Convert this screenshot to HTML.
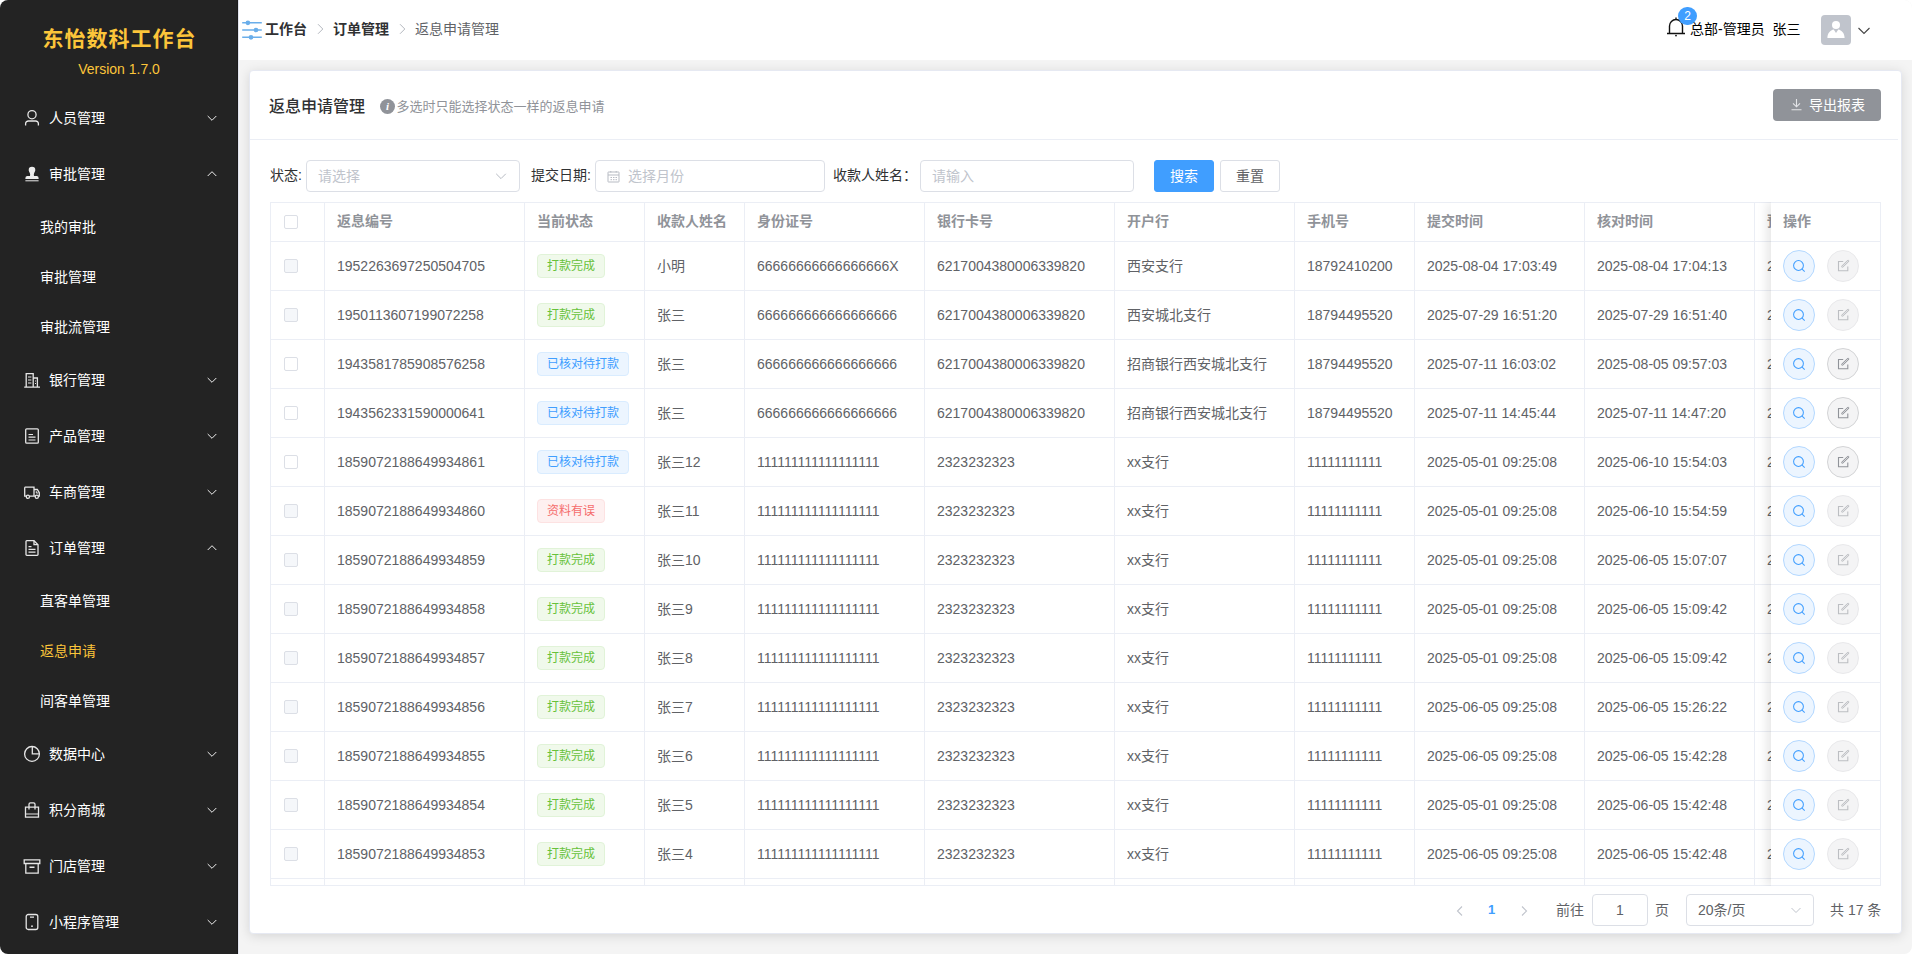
<!DOCTYPE html>
<html lang="zh-CN"><head><meta charset="utf-8"><title>返息申请管理</title>
<style>
*{box-sizing:border-box;margin:0;padding:0}
html,body{width:1912px;height:954px;overflow:hidden;background:#fff}
body{font-family:"Liberation Sans","Noto Sans CJK SC",sans-serif;font-size:14px;color:#606266;position:relative}
.abs{position:absolute}
#side{position:absolute;left:0;top:0;width:238px;height:954px;background:#232323;border-radius:8px 0 0 8px;overflow:hidden;border-right:1px solid #1a1a1a}
#side .title{position:absolute;left:0;width:238px;top:22px;height:34px;line-height:34px;text-align:center;font-size:21px;font-weight:700;color:#fcc53a;letter-spacing:1px;padding-left:1px}
#side .ver{position:absolute;left:0;width:238px;top:59px;height:20px;line-height:20px;text-align:center;font-size:14px;color:#fcc53a}
.mi{position:absolute;left:0;width:238px;height:56px;line-height:56px;color:#fff;font-size:14px}
.mi .tx{position:absolute;left:49px;top:0}
.mi svg.ic{position:absolute;left:23px;top:19px;width:18px;height:18px}
.mi svg.ar{position:absolute;left:206px;top:22px;width:12px;height:12px}
.si{position:absolute;left:40px;height:50px;line-height:50px;color:#fff;font-size:14px}
.si.act{color:#fcc53a}
#main{position:absolute;left:238px;top:0;width:1674px;height:954px;background:#f4f4f4;overflow:hidden;border-radius:0 8px 8px 0}
#vline{position:absolute;left:0;top:0;width:1px;height:954px;background:#e1e3ee}
#hdr{position:absolute;left:0;top:0;width:1674px;height:60px;background:#fff}
.bc{position:absolute;top:0;height:58px;line-height:58px;font-size:14px;white-space:nowrap}
.bc b{color:#303133;font-weight:700}
#card{position:absolute;left:11px;top:70px;width:1653px;height:864px;background:#fff;border-radius:4px;box-shadow:0 2px 12px 0 rgba(0,0,0,.125);border:1px solid #e6e9f2}
.ipt{position:absolute;height:32px;border:1px solid #dcdfe6;border-radius:4px;background:#fff;color:#c0c4cc;font-size:14px;line-height:30px;white-space:nowrap}
.lbl{position:absolute;height:32px;line-height:32px;font-size:14px;color:#303133;white-space:nowrap}
.btn{position:absolute;height:32px;line-height:30px;border-radius:3px;font-size:14px;text-align:center;border:1px solid #dcdfe6;color:#606266;background:#fff}
#tbl{position:absolute;left:20px;top:131px;width:1611px;height:684px;overflow:hidden;border:1px solid #ebeef5;border-right:none}
.row{position:absolute;left:0;height:49px;width:1800px;border-bottom:1px solid #ebeef5}
.row.h{height:39px}
.c{position:absolute;top:0;height:100%;border-right:1px solid #ebeef5;padding-left:12px;line-height:48px;white-space:nowrap;overflow:hidden;font-size:14px;color:#606266}
.row.h .c{line-height:36px;font-weight:700;color:#909399}
.cb{position:absolute;left:13px;width:14px;height:14px;border:1px solid #dcdfe6;border-radius:2px;background:#fff}
.cb.d{background:#f5f7fa}
.tag{display:inline-block;height:24px;line-height:22px;padding:0 9px;font-size:12px;border-radius:4px;border:1px solid;vertical-align:middle;position:relative;top:-1px}
.tag.g{background:#f0f9eb;border-color:#e1f3d8;color:#67c23a}
.tag.b{background:#ecf5ff;border-color:#d9ecff;color:#409eff}
.tag.r{background:#fef0f0;border-color:#fde2e2;color:#f56c6c}
#fix{position:absolute;left:1521px;top:131px;width:110px;height:684px;overflow:hidden;background:#fff;box-shadow:-4px 0 10px rgba(0,0,0,.10);clip-path:inset(0 0 0 -14px);border-top:1px solid #ebeef5;border-right:1px solid #ebeef5;border-bottom:1px solid #ebeef5}
#fix .row{width:110px}
.ob{position:absolute;top:8px;width:32px;height:32px;border-radius:50%;border:1px solid}
.ob svg{position:absolute;left:8px;top:8px;width:14px;height:14px}
.ob.s{left:12px;background:#ecf5ff;border-color:#b3d8ff;color:#409eff}
.ob.e{left:56px;background:#f4f4f5;border-color:#d3d4d6;color:#909399}
.ob.e.d{background:#f4f4f5;border-color:#e9e9eb;color:#bcbec2}
.pg{position:absolute;top:823px;height:32px;line-height:32px;font-size:13px;color:#606266;white-space:nowrap}
</style></head>
<body>
<div id="side">
<div class="title">东怡数科工作台</div>
<div class="ver">Version 1.7.0</div>
<div class="mi" style="top:90px"><svg class="ic" viewBox="0 0 18 18" fill="none" stroke="#e6e6e6" stroke-width="1.3"><circle cx="9" cy="5.7" r="4.1"/><path d="M2.6 16.6v-1.8a2.8 2.8 0 0 1 2.8-2.8h7.2a2.8 2.8 0 0 1 2.8 2.8v1.8"/></svg><span class="tx">人员管理</span><svg class="ar" viewBox="0 0 12 12"><path d="M1.7 4 L6 8.3 L10.3 4" fill="none" stroke="#f0f0f0" stroke-width="1"/></svg></div>
<div class="mi" style="top:146px"><svg class="ic" viewBox="0 0 18 18" fill="none" stroke="#e6e6e6" stroke-width="1.3"><path d="M9 1.7a3.3 3.3 0 0 0-3.3 3.3c0 1.2 0.6 2 1.1 2.9 0.4 0.8 0.5 1.9 0.1 3.100H4.4a2 2 0 0 0-2 2v1.1h13.2v-1.1a2 2 0 0 0-2-2h-2.500c-0.4-1.200-0.300-2.300 0.1-3.100 0.5-0.9 1.1-1.700 1.1-2.900a3.3 3.3 0 0 0-3.3-3.3z" fill="#ececec" stroke="none"/><path d="M2.4 15.8h13.2" stroke="#ececec" stroke-width="1"/></svg><span class="tx">审批管理</span><svg class="ar" viewBox="0 0 12 12"><path d="M1.7 8 L6 3.7 L10.3 8" fill="none" stroke="#f0f0f0" stroke-width="1"/></svg></div>
<div class="si" style="top:202px">我的审批</div>
<div class="si" style="top:252px">审批管理</div>
<div class="si" style="top:302px">审批流管理</div>
<div class="mi" style="top:352px"><svg class="ic" viewBox="0 0 18 18" fill="none" stroke="#e6e6e6" stroke-width="1.3"><path d="M3.200 16.200v-13.500h7v13.500M10.200 7h4.200v9.200M1.200 16.200h15.800"/><path d="M5 6h3.400M5 9h3.400M5 12h3.400M12 10h1M12 12.500h1" stroke-width="1.200"/></svg><span class="tx">银行管理</span><svg class="ar" viewBox="0 0 12 12"><path d="M1.7 4 L6 8.3 L10.3 4" fill="none" stroke="#f0f0f0" stroke-width="1"/></svg></div>
<div class="mi" style="top:408px"><svg class="ic" viewBox="0 0 18 18" fill="none" stroke="#e6e6e6" stroke-width="1.3"><rect x="2.700" y="1.800" width="12.600" height="14.400" rx="1"/><path d="M5.500 7.500h4.500M5.500 10.200h7M5.500 13h7" stroke-width="1.200"/></svg><span class="tx">产品管理</span><svg class="ar" viewBox="0 0 12 12"><path d="M1.7 4 L6 8.3 L10.3 4" fill="none" stroke="#f0f0f0" stroke-width="1"/></svg></div>
<div class="mi" style="top:464px"><svg class="ic" viewBox="0 0 18 18" fill="none" stroke="#e6e6e6" stroke-width="1.3"><path d="M1.700 4.200h9.300v9h-4.600M3.400 13.200h-1.700v-9M11 6.500h3.300l2 3.300v3.400h-1.300M11 13.200h1.300"/><circle cx="4.900" cy="13.800" r="1.600"/><circle cx="13.800" cy="13.800" r="1.600"/><path d="M13.300 8.200v1.800h1.800" stroke-width="1"/></svg><span class="tx">车商管理</span><svg class="ar" viewBox="0 0 12 12"><path d="M1.7 4 L6 8.3 L10.3 4" fill="none" stroke="#f0f0f0" stroke-width="1"/></svg></div>
<div class="mi" style="top:520px"><svg class="ic" viewBox="0 0 18 18" fill="none" stroke="#e6e6e6" stroke-width="1.3"><path d="M3 2.500a.8.800 0 0 1 .8-.8h7.200l4 4v9.800a.8.800 0 0 1-.8.800h-10.400a.8.800 0 0 1-.8-.8z"/><path d="M11 1.700v4h4"/><path d="M5.500 7.700h3M5.500 10.400h7M5.500 13.100h7" stroke-width="1.200"/></svg><span class="tx">订单管理</span><svg class="ar" viewBox="0 0 12 12"><path d="M1.7 8 L6 3.7 L10.3 8" fill="none" stroke="#f0f0f0" stroke-width="1"/></svg></div>
<div class="si" style="top:576px">直客单管理</div>
<div class="si act" style="top:626px">返息申请</div>
<div class="si" style="top:676px">间客单管理</div>
<div class="mi" style="top:726px"><svg class="ic" viewBox="0 0 18 18" fill="none" stroke="#e6e6e6" stroke-width="1.3"><circle cx="9" cy="8.900" r="7.400"/><path d="M9.300 1.500v7.400h7.100"/></svg><span class="tx">数据中心</span><svg class="ar" viewBox="0 0 12 12"><path d="M1.7 4 L6 8.3 L10.3 4" fill="none" stroke="#f0f0f0" stroke-width="1"/></svg></div>
<div class="mi" style="top:782px"><svg class="ic" viewBox="0 0 18 18" fill="none" stroke="#e6e6e6" stroke-width="1.3"><path d="M2.500 6.200h13v10h-13z"/><path d="M6 8.500v-5.200a1.500 1.500 0 0 1 1.500-1.500h3a1.500 1.500 0 0 1 1.500 1.500v5.200"/><path d="M2.500 13h13" stroke-width="1.100"/></svg><span class="tx">积分商城</span><svg class="ar" viewBox="0 0 12 12"><path d="M1.7 4 L6 8.3 L10.3 4" fill="none" stroke="#f0f0f0" stroke-width="1"/></svg></div>
<div class="mi" style="top:838px"><svg class="ic" viewBox="0 0 18 18" fill="none" stroke="#e6e6e6" stroke-width="1.3"><path d="M1.200 2.800h15.600v3.700h-15.600z"/><path d="M2.800 6.500v9.700h12.400v-9.700"/><path d="M6.500 10.300h5" stroke-width="1.400"/></svg><span class="tx">门店管理</span><svg class="ar" viewBox="0 0 12 12"><path d="M1.7 4 L6 8.3 L10.3 4" fill="none" stroke="#f0f0f0" stroke-width="1"/></svg></div>
<div class="mi" style="top:894px"><svg class="ic" viewBox="0 0 18 18" fill="none" stroke="#e6e6e6" stroke-width="1.3"><rect x="3.200" y="1.500" width="11.600" height="15" rx="2"/><path d="M7 4.200h4" stroke-width="1.200"/><circle cx="9" cy="13.200" r=".9" fill="#e6e6e6" stroke="none"/></svg><span class="tx">小程序管理</span><svg class="ar" viewBox="0 0 12 12"><path d="M1.7 4 L6 8.3 L10.3 4" fill="none" stroke="#f0f0f0" stroke-width="1"/></svg></div>
</div>
<div id="main">
<div id="hdr">
<svg class="abs" style="left:3px;top:18px;width:22px;height:24px" viewBox="0 0 22 24" fill="none" stroke="#6aaeea" stroke-width="1.500"><path d="M1.200 4.800h19.600M1.200 12h19.600M1.200 19.300h19.600"/><circle cx="6.900" cy="4.800" r="1.600" fill="#6aaeea"/><circle cx="15" cy="12" r="1.600" fill="#6aaeea"/><circle cx="10" cy="19.300" r="1.600" fill="#6aaeea"/></svg>
<div class="bc" style="left:27px"><b>工作台</b></div>
<svg class="abs" style="left:76px;top:23px;width:12px;height:12px" viewBox="0 0 12 12"><path d="M4 1.200 L8.800 6 L4 10.800" fill="none" stroke="#b4b8bf" stroke-width="1"/></svg>
<div class="bc" style="left:95px"><b>订单管理</b></div>
<svg class="abs" style="left:158px;top:23px;width:12px;height:12px" viewBox="0 0 12 12"><path d="M4 1.200 L8.800 6 L4 10.800" fill="none" stroke="#b4b8bf" stroke-width="1"/></svg>
<div class="bc" style="left:177px;color:#606266">返息申请管理</div>
<svg class="abs" style="left:1427px;top:16px;width:22px;height:22px" viewBox="0 0 22 22" fill="none" stroke="#111" stroke-width="1.400"><path d="M2 17.500h18M4.500 17.500v-7.500a6.500 6.500 0 0 1 13 0v7.500M11 3.500v-2"/><circle cx="11" cy="19.600" r=".9" fill="#111" stroke="none"/></svg>
<div class="abs" style="left:1440px;top:7px;width:19px;height:18px;border-radius:9px;background:#409eff;color:#fff;font-size:12px;line-height:18px;text-align:center">2</div>
<div class="abs" style="left:1452px;top:0;height:58px;line-height:58px;font-size:14px;color:#000;white-space:nowrap">总部-管理员&nbsp; 张三</div>
<div class="abs" style="left:1583px;top:15px;width:30px;height:30px;border-radius:4px;background:#c0c4cc;overflow:hidden"><svg viewBox="0 0 30 30" style="position:absolute;left:0;top:0;width:30px;height:30px"><circle cx="15" cy="10" r="4" fill="#fff"/><path d="M6.4 23c0-4.6 3-7.9 6.3-8.4l2.3 3.3 2.3-3.3c3.3 0.5 6.3 3.8 6.3 8.4z" fill="#fff"/></svg></div>
<svg class="abs" style="left:1619px;top:24px;width:14px;height:14px" viewBox="0 0 14 14"><path d="M1.500 4 L7 9.500 L12.500 4" fill="none" stroke="#444" stroke-width="1.100"/></svg>
</div>
<div id="card">
<div class="abs" style="left:19px;top:20px;height:32px;line-height:32px;font-size:16px;color:#303133;font-weight:500;white-space:nowrap">返息申请管理</div>
<div class="abs" style="left:130px;top:28px;width:15px;height:15px;border-radius:50%;background:#909399;color:#fff;font-size:11px;line-height:15px;text-align:center;font-style:italic;font-weight:700;font-family:'Liberation Serif',serif">i</div>
<div class="abs" style="left:146.500px;top:20px;height:32px;line-height:32px;font-size:13px;color:#909399;white-space:nowrap">多选时只能选择状态一样的返息申请</div>
<div class="abs" style="left:1523px;top:18px;width:108px;height:32px;border-radius:4px;background:#909399;opacity:1;color:#fff;font-size:14px;line-height:32px;white-space:nowrap"><svg style="position:absolute;left:16.6px;top:9.4px;width:13px;height:13px" viewBox="0 0 13 13" fill="none" stroke="#e4e5e8" stroke-width="1.100"><path d="M6.500 1v7.500M3 5.300l3.500 3.500 3.500-3.500M1.500 11.800h10"/></svg><span style="position:absolute;left:36px">导出报表</span></div>
<div class="abs" style="left:0;top:68px;width:1648px;height:1px;background:#ebeef5"></div>
<div class="lbl" style="left:20px;top:88px">状态:</div>
<div class="ipt" style="left:56px;top:89px;width:214px;padding-left:11px">请选择<svg style="position:absolute;right:12px;top:9px;width:12px;height:12px" viewBox="0 0 12 12"><path d="M1.200 3.800 L6 8.600 L10.800 3.800" fill="none" stroke="#b7bbc3" stroke-width="1"/></svg></div>
<div class="lbl" style="left:281px;top:88px">提交日期:</div>
<div class="ipt" style="left:345px;top:89px;width:230px;padding-left:32px">选择月份<svg style="position:absolute;left:10.500px;top:9px;width:13px;height:13px" viewBox="0 0 13 13" fill="none" stroke="#b7bbc3" stroke-width="1"><rect x="1" y="2" width="11" height="10" rx=".4"/><path d="M1 5h11M3.500 7.500h1.500M6 7.500h1.500M8.500 7.500h1.500M3.500 9.700h1.500M6 9.700h1.500M8.500 9.700h1.500M3.800 1v1.500M9.200 1v1.500"/></svg></div>
<div class="lbl" style="left:583px;top:88px">收款人姓名：</div>
<div class="ipt" style="left:670px;top:89px;width:214px;padding-left:11px">请输入</div>
<div class="btn" style="left:904px;top:89px;width:60px;background:#409eff;border-color:#409eff;color:#fff">搜索</div>
<div class="btn" style="left:970px;top:89px;width:60px">重置</div>
<div id="tbl">
<div class="row h" style="top:0"><div class="c" style="left:0px;width:54px"><span class="cb" style="top:12px"></span></div><div class="c" style="left:54px;width:200px">返息编号</div><div class="c" style="left:254px;width:120px">当前状态</div><div class="c" style="left:374px;width:100px">收款人姓名</div><div class="c" style="left:474px;width:180px">身份证号</div><div class="c" style="left:654px;width:190px">银行卡号</div><div class="c" style="left:844px;width:180px">开户行</div><div class="c" style="left:1024px;width:120px">手机号</div><div class="c" style="left:1144px;width:170px">提交时间</div><div class="c" style="left:1314px;width:170px">核对时间</div><div class="c" style="left:1484px;width:170px">预计打款时间</div></div>
<div class="row" style="top:39px"><div class="c" style="left:0px;width:54px"><span class="cb d" style="top:17px"></span></div><div class="c" style="left:54px;width:200px">1952263697250504705</div><div class="c" style="left:254px;width:120px"><span class="tag g">打款完成</span></div><div class="c" style="left:374px;width:100px">小明</div><div class="c" style="left:474px;width:180px">66666666666666666X</div><div class="c" style="left:654px;width:190px">6217004380006339820</div><div class="c" style="left:844px;width:180px">西安支行</div><div class="c" style="left:1024px;width:120px">18792410200</div><div class="c" style="left:1144px;width:170px">2025-08-04 17:03:49</div><div class="c" style="left:1314px;width:170px">2025-08-04 17:04:13</div><div class="c" style="left:1484px;width:170px">2025-08-05 10:00:00</div></div>
<div class="row" style="top:88px"><div class="c" style="left:0px;width:54px"><span class="cb d" style="top:17px"></span></div><div class="c" style="left:54px;width:200px">1950113607199072258</div><div class="c" style="left:254px;width:120px"><span class="tag g">打款完成</span></div><div class="c" style="left:374px;width:100px">张三</div><div class="c" style="left:474px;width:180px">666666666666666666</div><div class="c" style="left:654px;width:190px">6217004380006339820</div><div class="c" style="left:844px;width:180px">西安城北支行</div><div class="c" style="left:1024px;width:120px">18794495520</div><div class="c" style="left:1144px;width:170px">2025-07-29 16:51:20</div><div class="c" style="left:1314px;width:170px">2025-07-29 16:51:40</div><div class="c" style="left:1484px;width:170px">2025-08-05 10:00:00</div></div>
<div class="row" style="top:137px"><div class="c" style="left:0px;width:54px"><span class="cb" style="top:17px"></span></div><div class="c" style="left:54px;width:200px">1943581785908576258</div><div class="c" style="left:254px;width:120px"><span class="tag b">已核对待打款</span></div><div class="c" style="left:374px;width:100px">张三</div><div class="c" style="left:474px;width:180px">666666666666666666</div><div class="c" style="left:654px;width:190px">6217004380006339820</div><div class="c" style="left:844px;width:180px">招商银行西安城北支行</div><div class="c" style="left:1024px;width:120px">18794495520</div><div class="c" style="left:1144px;width:170px">2025-07-11 16:03:02</div><div class="c" style="left:1314px;width:170px">2025-08-05 09:57:03</div><div class="c" style="left:1484px;width:170px">2025-08-05 10:00:00</div></div>
<div class="row" style="top:186px"><div class="c" style="left:0px;width:54px"><span class="cb" style="top:17px"></span></div><div class="c" style="left:54px;width:200px">1943562331590000641</div><div class="c" style="left:254px;width:120px"><span class="tag b">已核对待打款</span></div><div class="c" style="left:374px;width:100px">张三</div><div class="c" style="left:474px;width:180px">666666666666666666</div><div class="c" style="left:654px;width:190px">6217004380006339820</div><div class="c" style="left:844px;width:180px">招商银行西安城北支行</div><div class="c" style="left:1024px;width:120px">18794495520</div><div class="c" style="left:1144px;width:170px">2025-07-11 14:45:44</div><div class="c" style="left:1314px;width:170px">2025-07-11 14:47:20</div><div class="c" style="left:1484px;width:170px">2025-08-05 10:00:00</div></div>
<div class="row" style="top:235px"><div class="c" style="left:0px;width:54px"><span class="cb" style="top:17px"></span></div><div class="c" style="left:54px;width:200px">1859072188649934861</div><div class="c" style="left:254px;width:120px"><span class="tag b">已核对待打款</span></div><div class="c" style="left:374px;width:100px">张三12</div><div class="c" style="left:474px;width:180px">111111111111111111</div><div class="c" style="left:654px;width:190px">2323232323</div><div class="c" style="left:844px;width:180px">xx支行</div><div class="c" style="left:1024px;width:120px">11111111111</div><div class="c" style="left:1144px;width:170px">2025-05-01 09:25:08</div><div class="c" style="left:1314px;width:170px">2025-06-10 15:54:03</div><div class="c" style="left:1484px;width:170px">2025-08-05 10:00:00</div></div>
<div class="row" style="top:284px"><div class="c" style="left:0px;width:54px"><span class="cb d" style="top:17px"></span></div><div class="c" style="left:54px;width:200px">1859072188649934860</div><div class="c" style="left:254px;width:120px"><span class="tag r">资料有误</span></div><div class="c" style="left:374px;width:100px">张三11</div><div class="c" style="left:474px;width:180px">111111111111111111</div><div class="c" style="left:654px;width:190px">2323232323</div><div class="c" style="left:844px;width:180px">xx支行</div><div class="c" style="left:1024px;width:120px">11111111111</div><div class="c" style="left:1144px;width:170px">2025-05-01 09:25:08</div><div class="c" style="left:1314px;width:170px">2025-06-10 15:54:59</div><div class="c" style="left:1484px;width:170px">2025-08-05 10:00:00</div></div>
<div class="row" style="top:333px"><div class="c" style="left:0px;width:54px"><span class="cb d" style="top:17px"></span></div><div class="c" style="left:54px;width:200px">1859072188649934859</div><div class="c" style="left:254px;width:120px"><span class="tag g">打款完成</span></div><div class="c" style="left:374px;width:100px">张三10</div><div class="c" style="left:474px;width:180px">111111111111111111</div><div class="c" style="left:654px;width:190px">2323232323</div><div class="c" style="left:844px;width:180px">xx支行</div><div class="c" style="left:1024px;width:120px">11111111111</div><div class="c" style="left:1144px;width:170px">2025-05-01 09:25:08</div><div class="c" style="left:1314px;width:170px">2025-06-05 15:07:07</div><div class="c" style="left:1484px;width:170px">2025-08-05 10:00:00</div></div>
<div class="row" style="top:382px"><div class="c" style="left:0px;width:54px"><span class="cb d" style="top:17px"></span></div><div class="c" style="left:54px;width:200px">1859072188649934858</div><div class="c" style="left:254px;width:120px"><span class="tag g">打款完成</span></div><div class="c" style="left:374px;width:100px">张三9</div><div class="c" style="left:474px;width:180px">111111111111111111</div><div class="c" style="left:654px;width:190px">2323232323</div><div class="c" style="left:844px;width:180px">xx支行</div><div class="c" style="left:1024px;width:120px">11111111111</div><div class="c" style="left:1144px;width:170px">2025-05-01 09:25:08</div><div class="c" style="left:1314px;width:170px">2025-06-05 15:09:42</div><div class="c" style="left:1484px;width:170px">2025-08-05 10:00:00</div></div>
<div class="row" style="top:431px"><div class="c" style="left:0px;width:54px"><span class="cb d" style="top:17px"></span></div><div class="c" style="left:54px;width:200px">1859072188649934857</div><div class="c" style="left:254px;width:120px"><span class="tag g">打款完成</span></div><div class="c" style="left:374px;width:100px">张三8</div><div class="c" style="left:474px;width:180px">111111111111111111</div><div class="c" style="left:654px;width:190px">2323232323</div><div class="c" style="left:844px;width:180px">xx支行</div><div class="c" style="left:1024px;width:120px">11111111111</div><div class="c" style="left:1144px;width:170px">2025-05-01 09:25:08</div><div class="c" style="left:1314px;width:170px">2025-06-05 15:09:42</div><div class="c" style="left:1484px;width:170px">2025-08-05 10:00:00</div></div>
<div class="row" style="top:480px"><div class="c" style="left:0px;width:54px"><span class="cb d" style="top:17px"></span></div><div class="c" style="left:54px;width:200px">1859072188649934856</div><div class="c" style="left:254px;width:120px"><span class="tag g">打款完成</span></div><div class="c" style="left:374px;width:100px">张三7</div><div class="c" style="left:474px;width:180px">111111111111111111</div><div class="c" style="left:654px;width:190px">2323232323</div><div class="c" style="left:844px;width:180px">xx支行</div><div class="c" style="left:1024px;width:120px">11111111111</div><div class="c" style="left:1144px;width:170px">2025-06-05 09:25:08</div><div class="c" style="left:1314px;width:170px">2025-06-05 15:26:22</div><div class="c" style="left:1484px;width:170px">2025-08-05 10:00:00</div></div>
<div class="row" style="top:529px"><div class="c" style="left:0px;width:54px"><span class="cb d" style="top:17px"></span></div><div class="c" style="left:54px;width:200px">1859072188649934855</div><div class="c" style="left:254px;width:120px"><span class="tag g">打款完成</span></div><div class="c" style="left:374px;width:100px">张三6</div><div class="c" style="left:474px;width:180px">111111111111111111</div><div class="c" style="left:654px;width:190px">2323232323</div><div class="c" style="left:844px;width:180px">xx支行</div><div class="c" style="left:1024px;width:120px">11111111111</div><div class="c" style="left:1144px;width:170px">2025-06-05 09:25:08</div><div class="c" style="left:1314px;width:170px">2025-06-05 15:42:28</div><div class="c" style="left:1484px;width:170px">2025-08-05 10:00:00</div></div>
<div class="row" style="top:578px"><div class="c" style="left:0px;width:54px"><span class="cb d" style="top:17px"></span></div><div class="c" style="left:54px;width:200px">1859072188649934854</div><div class="c" style="left:254px;width:120px"><span class="tag g">打款完成</span></div><div class="c" style="left:374px;width:100px">张三5</div><div class="c" style="left:474px;width:180px">111111111111111111</div><div class="c" style="left:654px;width:190px">2323232323</div><div class="c" style="left:844px;width:180px">xx支行</div><div class="c" style="left:1024px;width:120px">11111111111</div><div class="c" style="left:1144px;width:170px">2025-05-01 09:25:08</div><div class="c" style="left:1314px;width:170px">2025-06-05 15:42:48</div><div class="c" style="left:1484px;width:170px">2025-08-05 10:00:00</div></div>
<div class="row" style="top:627px"><div class="c" style="left:0px;width:54px"><span class="cb d" style="top:17px"></span></div><div class="c" style="left:54px;width:200px">1859072188649934853</div><div class="c" style="left:254px;width:120px"><span class="tag g">打款完成</span></div><div class="c" style="left:374px;width:100px">张三4</div><div class="c" style="left:474px;width:180px">111111111111111111</div><div class="c" style="left:654px;width:190px">2323232323</div><div class="c" style="left:844px;width:180px">xx支行</div><div class="c" style="left:1024px;width:120px">11111111111</div><div class="c" style="left:1144px;width:170px">2025-06-05 09:25:08</div><div class="c" style="left:1314px;width:170px">2025-06-05 15:42:48</div><div class="c" style="left:1484px;width:170px">2025-08-05 10:00:00</div></div>
<div class="row" style="top:676px"><div class="c" style="left:0px;width:54px"><span class="cb d" style="top:17px"></span></div><div class="c" style="left:54px;width:200px">1859072188649934852</div><div class="c" style="left:254px;width:120px"><span class="tag g">打款完成</span></div><div class="c" style="left:374px;width:100px">张三3</div><div class="c" style="left:474px;width:180px">111111111111111111</div><div class="c" style="left:654px;width:190px">2323232323</div><div class="c" style="left:844px;width:180px">xx支行</div><div class="c" style="left:1024px;width:120px">11111111111</div><div class="c" style="left:1144px;width:170px">2025-06-05 09:25:08</div><div class="c" style="left:1314px;width:170px">2025-06-05 15:42:48</div><div class="c" style="left:1484px;width:170px">2025-08-05 10:00:00</div></div>
</div>
<div id="fix">
<div class="row h" style="top:0"><div class="c" style="left:0;width:110px;border-right:none">操作</div></div>
<div class="row" style="top:39px"><span class="ob s"><svg viewBox="0 0 14 14" fill="none" stroke="currentColor" stroke-width="1.050"><circle cx="6.500" cy="6.500" r="4.900"/><path d="M10.100 10.200l2.600 2.400"/></svg></span><span class="ob e d"><svg viewBox="0 0 14 14" fill="none" stroke="currentColor" stroke-width="1.100"><path d="M7.200 2.500H2.500v9.200h9.300V7.600"/><path d="M6.400 7.500L12.100 2" stroke-width="2.300" stroke-linecap="round"/><path d="M6.400 7.500L12.100 2" stroke="#f4f4f5" stroke-width=".7" stroke-linecap="round"/></svg></span></div>
<div class="row" style="top:88px"><span class="ob s"><svg viewBox="0 0 14 14" fill="none" stroke="currentColor" stroke-width="1.050"><circle cx="6.500" cy="6.500" r="4.900"/><path d="M10.100 10.200l2.600 2.400"/></svg></span><span class="ob e d"><svg viewBox="0 0 14 14" fill="none" stroke="currentColor" stroke-width="1.100"><path d="M7.200 2.500H2.500v9.200h9.300V7.600"/><path d="M6.400 7.500L12.100 2" stroke-width="2.300" stroke-linecap="round"/><path d="M6.400 7.500L12.100 2" stroke="#f4f4f5" stroke-width=".7" stroke-linecap="round"/></svg></span></div>
<div class="row" style="top:137px"><span class="ob s"><svg viewBox="0 0 14 14" fill="none" stroke="currentColor" stroke-width="1.050"><circle cx="6.500" cy="6.500" r="4.900"/><path d="M10.100 10.200l2.600 2.400"/></svg></span><span class="ob e"><svg viewBox="0 0 14 14" fill="none" stroke="currentColor" stroke-width="1.100"><path d="M7.200 2.500H2.500v9.200h9.300V7.600"/><path d="M6.400 7.500L12.100 2" stroke-width="2.300" stroke-linecap="round"/><path d="M6.400 7.500L12.100 2" stroke="#f4f4f5" stroke-width=".7" stroke-linecap="round"/></svg></span></div>
<div class="row" style="top:186px"><span class="ob s"><svg viewBox="0 0 14 14" fill="none" stroke="currentColor" stroke-width="1.050"><circle cx="6.500" cy="6.500" r="4.900"/><path d="M10.100 10.200l2.600 2.400"/></svg></span><span class="ob e"><svg viewBox="0 0 14 14" fill="none" stroke="currentColor" stroke-width="1.100"><path d="M7.200 2.500H2.500v9.200h9.300V7.600"/><path d="M6.400 7.500L12.100 2" stroke-width="2.300" stroke-linecap="round"/><path d="M6.400 7.500L12.100 2" stroke="#f4f4f5" stroke-width=".7" stroke-linecap="round"/></svg></span></div>
<div class="row" style="top:235px"><span class="ob s"><svg viewBox="0 0 14 14" fill="none" stroke="currentColor" stroke-width="1.050"><circle cx="6.500" cy="6.500" r="4.900"/><path d="M10.100 10.200l2.600 2.400"/></svg></span><span class="ob e"><svg viewBox="0 0 14 14" fill="none" stroke="currentColor" stroke-width="1.100"><path d="M7.200 2.500H2.500v9.200h9.300V7.600"/><path d="M6.400 7.500L12.100 2" stroke-width="2.300" stroke-linecap="round"/><path d="M6.400 7.500L12.100 2" stroke="#f4f4f5" stroke-width=".7" stroke-linecap="round"/></svg></span></div>
<div class="row" style="top:284px"><span class="ob s"><svg viewBox="0 0 14 14" fill="none" stroke="currentColor" stroke-width="1.050"><circle cx="6.500" cy="6.500" r="4.900"/><path d="M10.100 10.200l2.600 2.400"/></svg></span><span class="ob e d"><svg viewBox="0 0 14 14" fill="none" stroke="currentColor" stroke-width="1.100"><path d="M7.200 2.500H2.500v9.200h9.300V7.600"/><path d="M6.400 7.500L12.100 2" stroke-width="2.300" stroke-linecap="round"/><path d="M6.400 7.500L12.100 2" stroke="#f4f4f5" stroke-width=".7" stroke-linecap="round"/></svg></span></div>
<div class="row" style="top:333px"><span class="ob s"><svg viewBox="0 0 14 14" fill="none" stroke="currentColor" stroke-width="1.050"><circle cx="6.500" cy="6.500" r="4.900"/><path d="M10.100 10.200l2.600 2.400"/></svg></span><span class="ob e d"><svg viewBox="0 0 14 14" fill="none" stroke="currentColor" stroke-width="1.100"><path d="M7.200 2.500H2.500v9.200h9.300V7.600"/><path d="M6.400 7.500L12.100 2" stroke-width="2.300" stroke-linecap="round"/><path d="M6.400 7.500L12.100 2" stroke="#f4f4f5" stroke-width=".7" stroke-linecap="round"/></svg></span></div>
<div class="row" style="top:382px"><span class="ob s"><svg viewBox="0 0 14 14" fill="none" stroke="currentColor" stroke-width="1.050"><circle cx="6.500" cy="6.500" r="4.900"/><path d="M10.100 10.200l2.600 2.400"/></svg></span><span class="ob e d"><svg viewBox="0 0 14 14" fill="none" stroke="currentColor" stroke-width="1.100"><path d="M7.200 2.500H2.500v9.200h9.300V7.600"/><path d="M6.400 7.500L12.100 2" stroke-width="2.300" stroke-linecap="round"/><path d="M6.400 7.500L12.100 2" stroke="#f4f4f5" stroke-width=".7" stroke-linecap="round"/></svg></span></div>
<div class="row" style="top:431px"><span class="ob s"><svg viewBox="0 0 14 14" fill="none" stroke="currentColor" stroke-width="1.050"><circle cx="6.500" cy="6.500" r="4.900"/><path d="M10.100 10.200l2.600 2.400"/></svg></span><span class="ob e d"><svg viewBox="0 0 14 14" fill="none" stroke="currentColor" stroke-width="1.100"><path d="M7.200 2.500H2.500v9.200h9.300V7.600"/><path d="M6.400 7.500L12.100 2" stroke-width="2.300" stroke-linecap="round"/><path d="M6.400 7.500L12.100 2" stroke="#f4f4f5" stroke-width=".7" stroke-linecap="round"/></svg></span></div>
<div class="row" style="top:480px"><span class="ob s"><svg viewBox="0 0 14 14" fill="none" stroke="currentColor" stroke-width="1.050"><circle cx="6.500" cy="6.500" r="4.900"/><path d="M10.100 10.200l2.600 2.400"/></svg></span><span class="ob e d"><svg viewBox="0 0 14 14" fill="none" stroke="currentColor" stroke-width="1.100"><path d="M7.200 2.500H2.500v9.200h9.300V7.600"/><path d="M6.400 7.500L12.100 2" stroke-width="2.300" stroke-linecap="round"/><path d="M6.400 7.500L12.100 2" stroke="#f4f4f5" stroke-width=".7" stroke-linecap="round"/></svg></span></div>
<div class="row" style="top:529px"><span class="ob s"><svg viewBox="0 0 14 14" fill="none" stroke="currentColor" stroke-width="1.050"><circle cx="6.500" cy="6.500" r="4.900"/><path d="M10.100 10.200l2.600 2.400"/></svg></span><span class="ob e d"><svg viewBox="0 0 14 14" fill="none" stroke="currentColor" stroke-width="1.100"><path d="M7.200 2.500H2.500v9.200h9.300V7.600"/><path d="M6.400 7.500L12.100 2" stroke-width="2.300" stroke-linecap="round"/><path d="M6.400 7.500L12.100 2" stroke="#f4f4f5" stroke-width=".7" stroke-linecap="round"/></svg></span></div>
<div class="row" style="top:578px"><span class="ob s"><svg viewBox="0 0 14 14" fill="none" stroke="currentColor" stroke-width="1.050"><circle cx="6.500" cy="6.500" r="4.900"/><path d="M10.100 10.200l2.600 2.400"/></svg></span><span class="ob e d"><svg viewBox="0 0 14 14" fill="none" stroke="currentColor" stroke-width="1.100"><path d="M7.200 2.500H2.500v9.200h9.300V7.600"/><path d="M6.400 7.500L12.100 2" stroke-width="2.300" stroke-linecap="round"/><path d="M6.400 7.500L12.100 2" stroke="#f4f4f5" stroke-width=".7" stroke-linecap="round"/></svg></span></div>
<div class="row" style="top:627px"><span class="ob s"><svg viewBox="0 0 14 14" fill="none" stroke="currentColor" stroke-width="1.050"><circle cx="6.500" cy="6.500" r="4.900"/><path d="M10.100 10.200l2.600 2.400"/></svg></span><span class="ob e d"><svg viewBox="0 0 14 14" fill="none" stroke="currentColor" stroke-width="1.100"><path d="M7.200 2.500H2.500v9.200h9.300V7.600"/><path d="M6.400 7.500L12.100 2" stroke-width="2.300" stroke-linecap="round"/><path d="M6.400 7.500L12.100 2" stroke="#f4f4f5" stroke-width=".7" stroke-linecap="round"/></svg></span></div>
<div class="row" style="top:676px"><span class="ob s"><svg viewBox="0 0 14 14" fill="none" stroke="currentColor" stroke-width="1.050"><circle cx="6.500" cy="6.500" r="4.900"/><path d="M10.100 10.200l2.600 2.400"/></svg></span><span class="ob e d"><svg viewBox="0 0 14 14" fill="none" stroke="currentColor" stroke-width="1.100"><path d="M7.200 2.500H2.500v9.200h9.300V7.600"/><path d="M6.400 7.500L12.100 2" stroke-width="2.300" stroke-linecap="round"/><path d="M6.400 7.500L12.100 2" stroke="#f4f4f5" stroke-width=".7" stroke-linecap="round"/></svg></span></div>
</div>
<svg class="abs" style="left:1204px;top:834px;width:12px;height:12px" viewBox="0 0 12 12"><path d="M8 1.500 L3.500 6 L8 10.500" fill="none" stroke="#c0c4cc" stroke-width="1.100"/></svg>
<div class="pg" style="left:1238px;color:#409eff;font-weight:700">1</div>
<svg class="abs" style="left:1268px;top:834px;width:12px;height:12px" viewBox="0 0 12 12"><path d="M4 1.500 L8.500 6 L4 10.500" fill="none" stroke="#c0c4cc" stroke-width="1.100"/></svg>
<div class="pg" style="left:1306px;font-size:14px">前往</div>
<div class="ipt" style="left:1342px;top:823px;width:56px;text-align:center;color:#606266;font-size:14px">1</div>
<div class="pg" style="left:1405px;font-size:14px">页</div>
<div class="ipt" style="left:1436px;top:823px;width:128px;padding-left:11px;color:#606266;font-size:14px">20条/页<svg style="position:absolute;right:11px;top:9px;width:12px;height:12px" viewBox="0 0 12 12"><path d="M1.500 4 L6 8.500 L10.500 4" fill="none" stroke="#c0c4cc" stroke-width="1"/></svg></div>
<div class="pg" style="left:1580px;font-size:14px">共 17 条</div>
</div>
<div id="vline"></div>
</div>
</body></html>
